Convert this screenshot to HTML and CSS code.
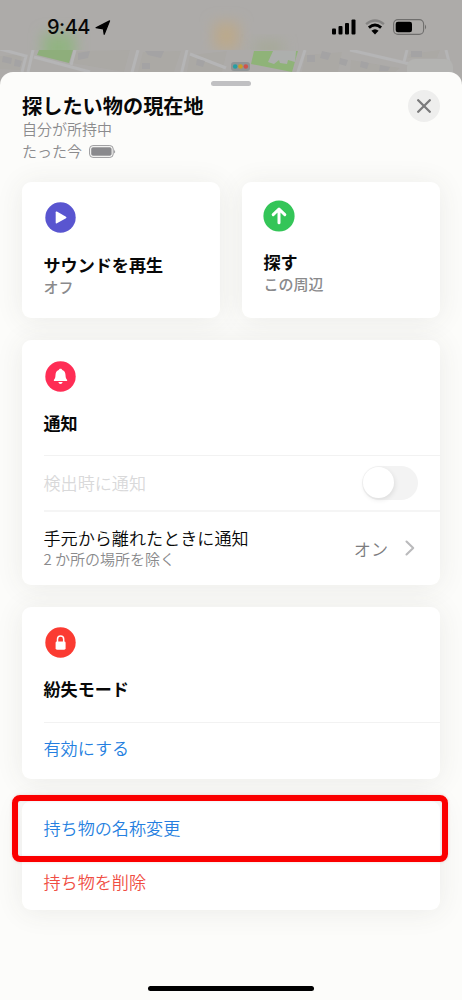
FILE: index.html
```html
<!DOCTYPE html>
<html lang="ja">
<head>
<meta charset="utf-8">
<title>探したい物の現在地</title>
<link rel="stylesheet" href="styles.css">
</head>
<body>
<div class="phone">
  <svg class="map" width="462" height="100" viewBox="0 0 462 100" aria-hidden="true">
    <defs>
      <filter id="soft" x="-60%" y="-60%" width="220%" height="220%"><feGaussianBlur stdDeviation="7"/></filter>
      <filter id="slight"><feGaussianBlur stdDeviation=".6"/></filter>
      <clipPath id="top"><path d="M0 0H462V50H0Z"/></clipPath>
      <clipPath id="streets"><path d="M0 50H462V100H0Z"/></clipPath>
    </defs>
    <rect width="462" height="100" fill="#adaba9"/>
    <g clip-path="url(#top)">
      <rect x="43" y="33" width="32" height="32" fill="#92b482" filter="url(#soft)"/>
      <rect x="214" y="22" width="25" height="28" fill="#bba98c" filter="url(#soft)"/>
      <rect x="255" y="42" width="28" height="12" fill="#a4a994" filter="url(#soft)"/>
    </g>
    <g clip-path="url(#streets)">
      <g filter="url(#slight)">
        <path d="M0 56 22 54 20 70 0 69ZM74 51 130 50 124 72 72 63ZM143 52 181 51 174 72H138ZM190 55 227 51 222 72H187ZM305 55 342 52 338 72H302ZM351 60 400 68 395 72H350ZM410 54 440 50 437 58H408Z" fill="#aba9a5"/>
        <path d="M0 49 26 56 22 72M33 50 28 72M34 57 90 72M75 50 71 65M138 50 131 76M187 50 181 75M190 54 226 68M305 50 297 75M350 50 410 64M407 50 404 62M446 50 452 74" fill="none" stroke="#b5b5b6" stroke-width="3"/>
        <path d="M3 56 12 58 11 64 2 62ZM15 59 22 61 20 67 14 66ZM78 53 90 51 88 58 78 60ZM145 51 164 51 161 58 148 55ZM142 63H150V69H142ZM197 59 205 61 203 67 196 65ZM307 55H315V62H307ZM322 51 331 53 328 60 320 58ZM340 58 348 60 346 66 339 64ZM361 61 369 63 367 69 360 67ZM380 65 390 67 388 71H379ZM411 51H422V57H411Z" fill="#a4a3a4"/>
      </g>
      <path d="M39 50H73L69 63 37 55Z" fill="#8eae7b"/>
      <path d="M254 51H298L292 72 251 64Z" fill="#8fb378"/>
      <path d="M273 51 296 51 295 62 288 60 287 64 280 63 279 60 274 64 268 62Z" fill="#adafad"/>
      <rect x="407" y="59" width="46" height="40" rx="8" fill="#b3b3b1"/>
      <rect x="231" y="62" width="19" height="9" rx="3" fill="#8f9495"/>
      <circle cx="235.2" cy="66.5" r="2.3" fill="#269ea2"/>
      <circle cx="240.5" cy="66.5" r="2.3" fill="#c99d27"/>
      <circle cx="245.8" cy="66.5" r="2.3" fill="#ce534e"/>
    </g>
  </svg>

  <header class="status">
    <div class="status-left">
      <span class="time">9:44</span>
      <svg width="16" height="16" viewBox="0 0 16 16"><path d="M14.6.9 9.2 14.3 8.4 8.8 1 7.7Z" stroke="#000" stroke-width="1.2" stroke-linejoin="round"/></svg>
    </div>
    <div class="status-right">
      <svg width="24" height="16" viewBox="0 0 24 16"><rect y="9.5" width="4" height="6" rx="1"/><rect x="6.5" y="7" width="4" height="8.5" rx="1"/><rect x="13" y="4" width="4" height="11.5" rx="1"/><rect x="19.5" y=".5" width="4" height="15" rx="1"/></svg>
      <svg class="wifi" width="20" height="16" viewBox="0 0 20 16"><path d="M1.1 5.2Q10-2.3 18.9 5.2" fill="none" stroke="#858483" stroke-width="2.4"/><path d="M3.9 8.6Q10 3.4 16.1 8.6" fill="none" stroke="#000" stroke-width="2.9"/><path d="M6.4 11.8Q10 8.8 13.6 11.8L10 15.4Z"/></svg>
      <svg class="battery" width="34" height="16" viewBox="0 0 34 16"><rect x=".6" y=".6" width="30" height="14.8" rx="4.4" fill="none" stroke="#6f6e6d" stroke-width="1.1"/><rect x="2.7" y="2.7" width="16.3" height="10.6" rx="2.3"/><path d="M32 5.4Q34.2 8 32 10.6Z" fill="#6f6e6d"/></svg>
    </div>
  </header>

  <main class="sheet">
    <div class="grabber"></div>
    <div class="heading">
      <div>
        <h1 class="title">探したい物の現在地</h1>
        <p class="meta">自分が所持中</p>
        <p class="meta meta-row">たった今
          <svg width="27" height="13" viewBox="0 0 27 13"><rect x=".6" y=".6" width="23.6" height="11.8" rx="3.3" fill="none" stroke="#99999b"/><rect x="2.2" y="2.2" width="20.4" height="8.6" rx="1.8" fill="#8a8a8d"/><path d="M25.2 4.4Q27 6.5 25.2 8.6Z" fill="#8a8a8d"/></svg>
        </p>
      </div>
      <button class="close" aria-label="閉じる"><svg width="14" height="14" viewBox="0 0 14 14"><path d="M1.2 1.2 12.8 12.8M12.8 1.2 1.2 12.8" fill="none" stroke="#7b7b7c" stroke-width="2.3" stroke-linecap="round"/></svg></button>
    </div>

    <section class="actions">
      <article class="card action">
        <svg class="badge" width="31" height="31" viewBox="0 0 31 31"><circle cx="15.5" cy="15.5" r="15.2" fill="#5955d0"/><path d="M10.7 10.2Q10.7 9 11.9 9.6L21 14.8Q22 15.5 21 16.2L11.9 21.3Q10.7 21.9 10.7 20.8Z" fill="#fff"/></svg>
        <h2 class="card-title">サウンドを再生</h2>
        <p class="caption">オフ</p>
      </article>
      <article class="card action find">
        <svg class="badge" width="32" height="32" viewBox="0 0 32 32"><circle cx="16" cy="16" r="15.6" fill="#34c558"/><path d="M16 22.7V9.2M10.2 14.6 16 9 21.8 14.6" fill="none" stroke="#fff" stroke-width="3" stroke-linecap="round" stroke-linejoin="round"/></svg>
        <h2 class="card-title">探す</h2>
        <p class="caption">この周辺</p>
      </article>
    </section>

    <section class="card">
      <div class="card-head">
        <svg class="badge" width="31" height="31" viewBox="0 0 31 31"><circle cx="15.5" cy="15.5" r="15.2" fill="#ff2d55"/><path d="M15.5 7.7C16.6 7.7 17.2 8.4 17.3 9.1 19.4 9.8 20.4 11.6 20.5 14 20.6 17 21.3 17.9 22 18.7 22.5 19.4 22 20 21.4 20H9.6C9 20 8.5 19.4 9 18.7 9.7 17.9 10.4 17 10.5 14 10.6 11.6 11.6 9.8 13.7 9.1 13.8 8.4 14.4 7.7 15.5 7.7ZM13.3 21H17.7Q17.1 22.9 15.5 22.9T13.3 21Z" fill="#fff"/></svg>
        <h2 class="card-title">通知</h2>
      </div>
      <div class="row detect"><span>検出時に通知</span><span class="switch"><span class="knob"></span></span></div>
      <div class="row leave">
        <div><p class="label">手元から離れたときに通知</p><p class="note">2 か所の場所を除く</p></div>
        <div class="value"><span>オン</span><svg width="10" height="16" viewBox="0 0 10 16"><path d="M1.5 1.5 8.2 8 1.5 14.5" fill="none" stroke="#bababc" stroke-width="2.1" stroke-linecap="round" stroke-linejoin="round"/></svg></div>
      </div>
    </section>

    <section class="card">
      <div class="card-head lost">
        <svg class="badge" width="31" height="31" viewBox="0 0 31 31"><circle cx="15.5" cy="15.5" r="15.2" fill="#fb3b32"/><rect x="10.6" y="14.4" width="10" height="8.3" rx="1.4" fill="#fff"/><path d="M12.5 15V12.2C12.5 7.9 18.7 7.9 18.7 12.2V15" fill="none" stroke="#fff" stroke-width="1.5"/></svg>
        <h2 class="card-title">紛失モード</h2>
      </div>
      <div class="row enable">有効にする</div>
    </section>

    <section class="card manage">
      <div class="rename">持ち物の名称変更</div>
      <div class="remove">持ち物を削除</div>
      <div class="highlight"></div>
    </section>
    <div class="home"></div>
  </main>
</div>
</body>
</html>
```

FILE: styles.css
```css
* { box-sizing: border-box; }
body, h1, h2, p { margin: 0; }
body {
  width: 462px;
  height: 1000px;
  overflow: hidden;
  font-family: "Noto Sans CJK JP", sans-serif;
  font-size: 17.1px;
  font-weight: 350;
  color: #080808;
}
svg { display: block; flex: none; }
.phone { position: relative; height: 1000px; display: flex; flex-direction: column; }
.map { position: absolute; top: 0; left: 0; }
.status { position: relative; height: 72px; flex: none; display: flex; justify-content: space-between; padding: 15px 35px 0 47px; }
.status-left { display: flex; gap: 5px; height: 25px; align-items: center; }
.time { font: 500 20px/25px Inter, sans-serif; letter-spacing: -0.5px; }
.status-right { display: flex; height: 24px; align-items: center; }
.wifi { margin-left: 9px; }
.battery { margin-left: 8px; }

.sheet {
  position: relative;
  flex: 1;
  padding: 9px 22px 0;
  border-radius: 13px 13px 0 0;
  background: #fcfcfa;
  overflow: hidden;
}
.grabber { width: 40px; height: 5px; margin: 0 auto; border-radius: 3px; background: #c0c0c2; }
.heading { display: flex; justify-content: space-between; height: 96px; padding-top: 4px; }
.title { margin-top: 2px; font-size: 20.2px; line-height: 27px; font-weight: 700; }
.meta { font-size: 15px; line-height: 22px; color: #8b8b8d; margin-top: -1px; }
.meta + .meta { margin-top: 0; }
.meta-row { display: flex; align-items: center; gap: 7px; }
.close { width: 32px; height: 32px; padding: 0; border: 0; border-radius: 50%; background: #eeeeed; display: grid; place-items: center; }

.card { position: relative; margin-bottom: 22px; background: #fff; border-radius: 9px; box-shadow: 0 2px 28px rgba(65, 65, 55, .09); }
.actions { display: grid; grid-template-columns: 198px 198px; gap: 22px; }
.action { height: 136px; padding: 20px 21.5px 0; }
.badge { margin-left: 1.5px; }
.card-title { font-size: 17.1px; line-height: 24px; font-weight: 700; }
.action .card-title { margin-top: 20px; }
.caption { font-size: 15px; line-height: 21px; margin-top: -1px; color: #8a8a8c; font-weight: 500; }
.find { padding-top: 18px; }
.find .badge { margin-left: -0.5px; }
.find .card-title { margin-top: 18px; }
.find .caption { margin-top: -1px; }

.card-head { height: 115px; padding: 21px 21.5px 0; }
.card-head .card-title { margin-top: 19px; }
.lost { padding-top: 20px; }
.row { margin-left: 21.5px; padding-right: 22px; border-top: 1px solid #f2f2f2; display: flex; align-items: center; justify-content: space-between; }
.detect { height: 55px; padding-bottom: 1px; color: #d9d9da; }
.switch { width: 56px; height: 34px; padding: 1px; border-radius: 17px; background: #f3f3f3; }
.knob { display: block; width: 31px; height: 31px; border-radius: 50%; background: #fff; box-shadow: 1px 2px 5px rgba(0, 0, 0, .09); }
.leave { height: 75px; padding-bottom: 1px; border-top: 2px solid #f5f5f5; }
.label { line-height: 22px; }
.note { font-size: 15px; line-height: 20px; color: #8a8a8c; }
.value { display: flex; align-items: center; gap: 17px; padding-right: 3px; color: #7c7c7e; }
.enable { height: 57px; padding-bottom: 7px; color: #257fe0; }

.manage { height: 109px; margin-bottom: 0; padding: 0 21.5px; line-height: 54px; }
.rename { height: 54px; color: #257fe0; }
.remove { color: #f04d43; }
.highlight { position: absolute; left: -10px; top: -6px; width: 436px; height: 67px; border: 6px solid #fb0000; border-radius: 8px; box-shadow: 0 0 3px rgba(180, 70, 70, .22), inset 0 0 3px rgba(120, 120, 160, .18); }
.home { width: 166px; height: 5px; margin: 76px auto 0; border-radius: 3px; background: #000; }
```
